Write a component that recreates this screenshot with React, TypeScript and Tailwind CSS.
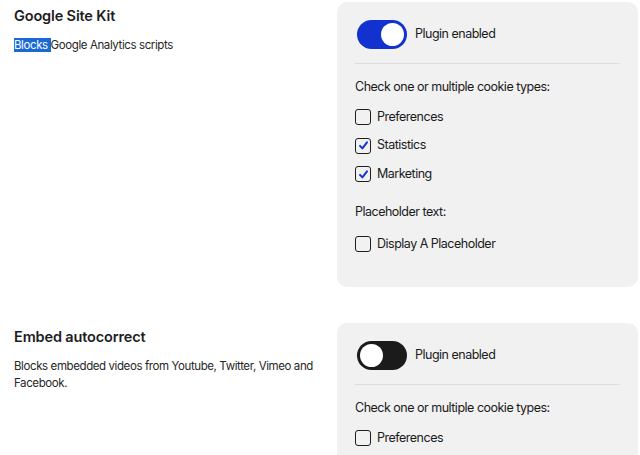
import type { ReactNode } from "react";

type Section = {
  title: string;
  desc: ReactNode;
  enabled: boolean;
  checks: { label: string; checked: boolean }[];
  placeholder: boolean;
};

const sections: Section[] = [
  {
    title: "Google Site Kit",
    desc: (
      <>
        <span className="bg-[#1a6ad6] text-white">Blocks </span>Google Analytics scripts
      </>
    ),
    enabled: true,
    checks: [
      { label: "Preferences", checked: false },
      { label: "Statistics", checked: true },
      { label: "Marketing", checked: true },
    ],
    placeholder: false,
  },
  {
    title: "Embed autocorrect",
    desc: "Blocks embedded videos from Youtube, Twitter, Vimeo and Facebook.",
    enabled: false,
    checks: [
      { label: "Preferences", checked: false },
      { label: "Statistics", checked: false },
      { label: "Marketing", checked: false },
    ],
    placeholder: false,
  },
];

function Toggle({ on }: { on: boolean }) {
  return (
    <span
      className={`ml-0.5 flex h-[29px] w-[50px] shrink-0 items-center rounded-full px-[3px] ${
        on ? "justify-end bg-[#1232cf]" : "justify-start bg-[#1b1b1b]"
      }`}
    >
      <span className="h-[23px] w-[23px] rounded-full bg-white" />
    </span>
  );
}

function Checkbox({ label, checked }: { label: string; checked: boolean }) {
  return (
    <label className="flex h-5 items-center gap-[6px]">
      <span className="flex h-4 w-4 items-center justify-center rounded-[3px] border-[1.5px] border-[#1e1e1e]">
        {checked && (
          <svg width="11" height="11" viewBox="0 0 12 12" fill="none" aria-hidden="true">
            <path d="M2.2 6.4l2.6 2.7L9.8 2.6" stroke="#1433d6" strokeWidth="2.2" strokeLinecap="round" strokeLinejoin="round" />
          </svg>
        )}
      </span>
      {label}
    </label>
  );
}

function Panel({ s }: { s: Section }) {
  return (
    <div className="rounded-[10px] bg-[#f1f1f1] px-[18px] pb-[33px] pt-[18px] text-[12.5px] tracking-[-0.04em] text-[#1a1a1a]">
      <div className="flex items-center gap-2">
        <Toggle on={s.enabled} />
        <span>Plugin enabled</span>
      </div>
      <div className="mt-[14px] border-t border-[#dddddd]" />
      <p className="mt-[14px] leading-[18px]">Check one or multiple cookie types:</p>
      <div className="mt-[11px] flex flex-col gap-[8.5px]">
        {s.checks.map((c) => (
          <Checkbox key={c.label} label={c.label} checked={c.checked} />
        ))}
      </div>
      <p className="mt-[19px] leading-[18px]">Placeholder text:</p>
      <div className="mt-[13px]">
        <Checkbox label="Display A Placeholder" checked={s.placeholder} />
      </div>
    </div>
  );
}

export default function App() {
  return (
    <div className="h-[455px] overflow-hidden bg-white pl-[14px] pr-[2px] pt-[2px] font-['Inter',sans-serif]">
      <div className="flex flex-col gap-[36px]">
        {sections.map((s) => (
          <section key={s.title} className="flex justify-between">
            <div className="w-[310px] pt-[4px]">
              <h2 className="text-[14.5px] font-semibold leading-5 tracking-[-0.01em] text-[#1d1d1d]">{s.title}</h2>
              <p className="mt-[11px] text-[11.5px] leading-[17px] tracking-[-0.035em] text-[#262626]">{s.desc}</p>
            </div>
            <div className="w-[301px]">
              <Panel s={s} />
            </div>
          </section>
        ))}
      </div>
    </div>
  );
}
